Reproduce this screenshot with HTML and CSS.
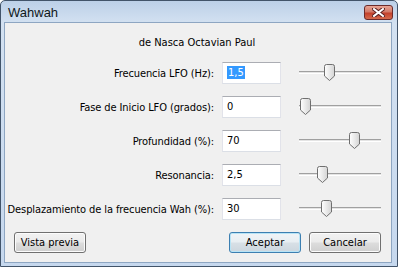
FILE: index.html
```html
<!DOCTYPE html>
<html>
<head>
<meta charset="utf-8">
<link rel="stylesheet" href="styles.css">
</head>
<body>
<div class="window">
  <div class="titlebar">
    <span class="title">Wahwah</span>
    <button class="close" aria-label="Cerrar">
      <svg width="13" height="9" viewBox="0 0 13 9">
        <path d="M2 1 L11 8 M11 1 L2 8" stroke="#5a2020" stroke-width="4" stroke-linecap="square"/>
        <path d="M2 1 L11 8 M11 1 L2 8" stroke="#ffffff" stroke-width="2" stroke-linecap="square"/>
      </svg>
    </button>
  </div>
  <div class="client">
    <div class="author">de Nasca Octavian Paul</div>
    <div class="params">
      <label class="lbl">Frecuencia LFO (Hz):</label>
      <div class="field"><span class="sel">1,5</span></div>
      <div class="slider"><div class="track"></div><svg class="thumb" style="left:25px" width="11" height="17" viewBox="0 0 11 17"><defs><linearGradient id="g" x1="0" y1="0" x2="1" y2="0"><stop offset="0" stop-color="#ffffff"/><stop offset="1" stop-color="#d4d4d4"/></linearGradient></defs><path d="M0.5 2.5 Q0.5 0.5 2.5 0.5 H8.5 Q10.5 0.5 10.5 2.5 V12 L5.5 16.5 L0.5 12 Z" fill="url(#g)" stroke="#6f6f6f"/></svg></div>

      <label class="lbl">Fase de Inicio LFO (grados):</label>
      <div class="field">0</div>
      <div class="slider"><div class="track"></div><svg class="thumb" style="left:1px" width="11" height="17" viewBox="0 0 11 17"><path d="M0.5 2.5 Q0.5 0.5 2.5 0.5 H8.5 Q10.5 0.5 10.5 2.5 V12 L5.5 16.5 L0.5 12 Z" fill="url(#g)" stroke="#6f6f6f"/></svg></div>

      <label class="lbl">Profundidad (%):</label>
      <div class="field">70</div>
      <div class="slider"><div class="track"></div><svg class="thumb" style="left:50px" width="11" height="17" viewBox="0 0 11 17"><path d="M0.5 2.5 Q0.5 0.5 2.5 0.5 H8.5 Q10.5 0.5 10.5 2.5 V12 L5.5 16.5 L0.5 12 Z" fill="url(#g)" stroke="#6f6f6f"/></svg></div>

      <label class="lbl">Resonancia:</label>
      <div class="field">2,5</div>
      <div class="slider"><div class="track"></div><svg class="thumb" style="left:18px" width="11" height="17" viewBox="0 0 11 17"><path d="M0.5 2.5 Q0.5 0.5 2.5 0.5 H8.5 Q10.5 0.5 10.5 2.5 V12 L5.5 16.5 L0.5 12 Z" fill="url(#g)" stroke="#6f6f6f"/></svg></div>

      <label class="lbl">Desplazamiento de la frecuencia Wah (%):</label>
      <div class="field">30</div>
      <div class="slider"><div class="track"></div><svg class="thumb" style="left:22px" width="11" height="17" viewBox="0 0 11 17"><path d="M0.5 2.5 Q0.5 0.5 2.5 0.5 H8.5 Q10.5 0.5 10.5 2.5 V12 L5.5 16.5 L0.5 12 Z" fill="url(#g)" stroke="#6f6f6f"/></svg></div>
    </div>
    <div class="buttons">
      <button class="btn">Vista previa</button>
      <div class="spacer"></div>
      <button class="btn default">Aceptar</button>
      <button class="btn">Cancelar</button>
    </div>
  </div>
</div>
</body>
</html>
```
FILE: styles.css
```css
* { box-sizing: border-box; }
html, body { margin: 0; padding: 0; background: #ffffff; }
body {
  font-family: "DejaVu Sans Condensed", "Liberation Sans", sans-serif;
  font-size: 11px;
  color: #000;
}
.window {
  width: 398px;
  height: 267px;
  display: flex;
  flex-direction: column;
  background: linear-gradient(to bottom, #bcd0e8 0px, #d3e1f1 22px, #c6d8ee 100%);
  border: 1px solid #42546a;
  border-radius: 5px 5px 0 0;
  overflow: hidden;
}
.titlebar {
  height: 21px;
  display: flex;
  align-items: center;
  padding: 0 4px 0 7px;
  flex: none;
}
.title {
  font-family: "Liberation Sans", sans-serif;
  font-size: 13px;
  color: #101820;
  flex: 1;
  padding-top: 1px;
}
.close {
  width: 29px;
  height: 15px;
  margin-top: 2px;
  padding: 0;
  border: 1px solid #6b2b2b;
  border-radius: 3px;
  background: linear-gradient(to bottom, #e8a494 0%, #d27a68 45%, #c4412c 55%, #d46a4c 100%);
  display: flex;
  align-items: center;
  justify-content: center;
}
.client {
  flex: 1;
  margin: 0 5px 3px 3px;
  background: #f0f0f0;
  border: 1px solid #8ea6c2;
  display: flex;
  flex-direction: column;
}
.author {
  text-align: center;
  margin-top: 13px;
  height: 14px;
  line-height: 14px;
  padding-right: 2px;
}
.params {
  margin-top: 12px;
  display: grid;
  grid-template-columns: 209px 59px 92px;
  column-gap: 8px;
  row-gap: 12px;
  grid-auto-rows: 22px;
}
.params .slider { margin-left: 10px; }
.lbl {
  text-align: right;
  align-self: center;
  white-space: nowrap;
  padding-top: 1px;
  letter-spacing: -0.1px;
}
.field {
  background: #fff;
  border: 1px solid #dbdfe6;
  border-top-color: #abadb3;
  border-left-color: #e2e3ea;
  border-right-color: #e2e3ea;
  padding: 3px 0 0 4px;
  line-height: 14px;
}
.sel {
  background: #3399ff;
  color: #fff;
  padding: 0 1px;
}
.slider {
  position: relative;
  height: 22px;
}
.track {
  position: absolute;
  left: 0;
  right: 0;
  top: 9px;
  height: 3px;
  border-top: 1px solid #a0a0a0;
  background: #e4e4e4;
  border-bottom: 1px solid #ffffff;
}
.thumb {
  position: absolute;
  top: 2px;
}
.buttons {
  margin-top: auto;
  margin-bottom: 9px;
  display: flex;
  gap: 8px;
  padding: 0 10px 0 9px;
}
.spacer { flex: 1; }
.btn {
  width: 72px;
  height: 21px;
  font-family: inherit;
  font-size: 11px;
  color: #000;
  border: 1px solid #707070;
  border-radius: 3px;
  background: linear-gradient(to bottom, #f2f2f2 0%, #ebebeb 48%, #dddddd 52%, #cfcfcf 100%);
  box-shadow: inset 0 0 0 1px #fcfcfc;
  padding: 0;
}
.btn.default {
  border-color: #3c7fb1;
  box-shadow: inset 0 0 0 1px #b8e4f6;
  background: linear-gradient(to bottom, #f0f4f7 0%, #e8eef2 48%, #d8e0e6 52%, #ccd6de 100%);
}
```
